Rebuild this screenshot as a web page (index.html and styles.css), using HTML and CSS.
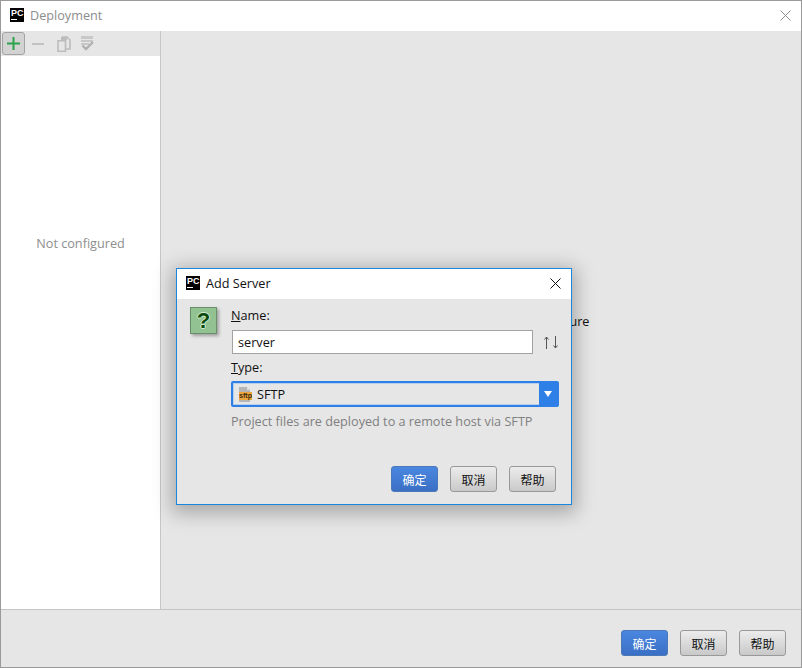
FILE: index.html
```html
<!DOCTYPE html>
<html lang="en">
<head>
<meta charset="utf-8">
<title>Deployment</title>
<link rel="stylesheet" href="styles.css">
</head>
<body>
<div class="window">
  <header class="titlebar">
    <span class="pc-logo"><span class="pc-text">PC</span><span class="pc-bar"></span></span>
    <span class="window-title">Deployment</span>
    <svg class="win-close" width="11" height="11" viewBox="0 0 11 11"><path d="M.5.500l10 10M10.500.500l-10 10" stroke="#8f8f8f" fill="none"/></svg>
  </header>
  <div class="middle">
    <aside class="sidebar">
      <div class="toolbar">
        <span class="tool tool-active">
          <svg width="13" height="13" viewBox="0 0 13 13"><path d="M6.500 0v13M0 6.500h13" stroke="#2ba24c" stroke-width="2" fill="none"/></svg>
        </span>
        <span class="tool tool-minus">
          <svg width="14" height="14" viewBox="0 0 14 14"><path d="M1 7h12" stroke="#c2c2c2" stroke-width="2" fill="none"/></svg>
        </span>
        <span class="tool tool-copy">
          <svg width="14" height="16" viewBox="0 0 14 16"><path d="M1 4.800h7.500v10.400H1zM5 1h5l3 3v9h-4" stroke="#bcbcbc" stroke-width="1.600" fill="none"/><path d="M4 1h6v3H4z" fill="#bcbcbc"/></svg>
        </span>
        <span class="tool tool-check">
          <svg width="13" height="15" viewBox="0 0 13 15"><path d="M0 0h12v3H0zM0 4h12v2H0zM0 7h8v2H0z" fill="#c8c8c8"/><path d="M1.500 9.500l3.500 3.500 7-7" stroke="#b0b0b0" stroke-width="2.400" fill="none"/></svg>
        </span>
      </div>
      <div class="list-area"><span class="empty-text">Not configured</span></div>
    </aside>
    <main class="content"><p class="hint">Please add a web server to configure</p></main>
  </div>
  <footer class="footer">
    <button class="btn btn-primary">确定</button>
    <button class="btn">取消</button>
    <button class="btn">帮助</button>
  </footer>

  <section class="dialog">
    <header class="dialog-title">
      <span class="pc-logo"><span class="pc-text">PC</span><span class="pc-bar"></span></span>
      <span class="dialog-name">Add Server</span>
      <svg class="dialog-close" width="11" height="11" viewBox="0 0 11 11"><path d="M.5.500l10 10M10.500.500l-10 10" stroke="#111" fill="none"/></svg>
    </header>
    <div class="dialog-body">
      <div class="question">?</div>
      <div class="form">
        <label class="field-label"><u>N</u>ame:</label>
        <div class="name-row">
          <div class="text-input">server</div>
          <svg class="sort-icon" width="16" height="13" viewBox="0 0 16 13"><path d="M3.500 13V1M1.500 3.500l2-2.500 2 2.500M12.500 0v12M10.500 9.500l2 2.500 2-2.500" stroke="#555" fill="none"/></svg>
        </div>
        <label class="field-label type-label"><u>T</u>ype:</label>
        <div class="select">
          <span class="select-value">
            <svg class="sftp-icon" width="13" height="15" viewBox="0 0 13 15"><path d="M0 0h8l3 3v12H0z" fill="#b5b5b5"/><path d="M8 0v3h3" fill="#ddd"/><rect y="5" width="13" height="8" fill="#eda63c"/><text class="sftp-text" x="6.500" y="11">sftp</text></svg>
            SFTP
          </span>
          <span class="select-arrow"><span class="arrow-shape"></span></span>
        </div>
        <p class="description">Project files are deployed to a remote host via SFTP</p>
      </div>
    </div>
    <footer class="dialog-footer">
      <button class="btn btn-primary">确定</button>
      <button class="btn">取消</button>
      <button class="btn">帮助</button>
    </footer>
  </section>
</div>
</body>
</html>
```
FILE: styles.css
```css
* { box-sizing: border-box; }
html, body { margin: 0; padding: 0; }
body {
  width: 802px;
  height: 668px;
  overflow: hidden;
  font-family: "Open Sans", "Noto Sans CJK SC", sans-serif;
  font-size: 12.67px;
  color: #111;
}
.window {
  position: relative;
  width: 802px;
  height: 668px;
  display: flex;
  flex-direction: column;
  border: 1px solid #9a9a9a;
  background: #e6e6e6;
}
.titlebar {
  height: 30px;
  flex: none;
  display: flex;
  align-items: center;
  padding: 0 0 2px 9px;
  background: #fff;
}
.pc-logo {
  position: relative;
  display: block;
  flex: none;
  width: 14px;
  height: 14px;
  background: #000;
}
.pc-text {
  position: absolute;
  left: 1px;
  top: 1px;
  color: #fff;
  font-family: "Liberation Sans", sans-serif;
  font-size: 9px;
  line-height: 8px;
  font-weight: 700;
}
.pc-bar {
  position: absolute;
  left: 1px;
  bottom: 2px;
  width: 6px;
  height: 1px;
  background: #fff;
}
.window-title {
  margin-left: 6px;
  color: #8c8c8c;
  line-height: 28px;
}
.win-close { margin-left: auto; margin-right: 10px; }
.middle { flex: 1; display: flex; min-height: 0; }
.sidebar {
  width: 160px;
  flex: none;
  display: flex;
  flex-direction: column;
  border-right: 1px solid #c6c6c6;
}
.toolbar {
  height: 25px;
  flex: none;
  display: flex;
  align-items: center;
  padding-left: 1px;
  background: #e6e6e6;
}
.tool {
  display: flex;
  align-items: center;
  justify-content: center;
  width: 23px;
  height: 23px;
}
.tool-active {
  border: 1px solid #a3a3a3;
  border-radius: 3px;
  background: #d2d2d2;
}
.tool-minus { margin-left: 1px; }
.tool-copy { margin-left: 3px; }
.tool-check { margin-left: 1px; }
.list-area {
  flex: 1;
  display: flex;
  justify-content: center;
  padding-top: 178px;
  background: #fff;
}
.empty-text { color: #8e8e8e; line-height: 18px; height: 18px; }
.content {
  flex: 1;
  display: flex;
  justify-content: center;
  padding-top: 280px;
}
.hint { margin: 0; line-height: 20px; }
.footer {
  height: 58px;
  flex: none;
  display: flex;
  justify-content: flex-end;
  align-items: flex-start;
  gap: 12px;
  padding: 20px 15px 0 0;
  border-top: 1px solid #c4c4c4;
}
.btn {
  width: 47px;
  height: 26px;
  padding: 0;
  border: 1px solid #999;
  border-radius: 3px;
  background: linear-gradient(#ececec, #c9c9c9);
  color: #111;
  font: 12px "Noto Sans CJK SC", sans-serif;
}
.btn-primary {
  border-color: #4a78b8;
  background: linear-gradient(#4a86e0, #3a70c4);
  color: #fff;
}
.dialog {
  position: absolute;
  left: 175px;
  top: 267px;
  width: 396px;
  height: 237px;
  display: flex;
  flex-direction: column;
  border: 1px solid #1c86dc;
  background: #e6e6e6;
  box-shadow: 0 4px 18px 4px rgba(0, 0, 0, .28);
}
.dialog-title {
  height: 30px;
  flex: none;
  display: flex;
  align-items: center;
  padding: 0 0 2px 9px;
  background: #fff;
}
.dialog-name { margin-left: 6px; }
.dialog-close { margin-left: auto; margin-right: 10px; }
.dialog-body { flex: 1; display: flex; padding: 7px 12px 0 13px; }
.question {
  width: 27px;
  height: 27px;
  flex: none;
  margin-top: 1px;
  border: 1px solid #6a8d6a;
  background: #92c292;
  box-shadow: 2px 2px 3px rgba(0, 0, 0, .3);
  color: #0c4a0c;
  font: 700 22px/25px "Liberation Sans", sans-serif;
  text-align: center;
  text-shadow: 1px 0 #cfeccf, -1px 0 #cfeccf, 0 1px #cfeccf, 0 -1px #cfeccf;
}
.form { margin-left: 14px; flex: 1; }
.field-label { display: block; line-height: 18px; }
.name-row {
  display: flex;
  align-items: center;
  margin: 6px 0 0 1px;
}
.text-input {
  width: 301px;
  height: 24px;
  border: 1px solid #a2a2a2;
  background: #fff;
  padding-left: 5px;
  line-height: 22px;
}
.sort-icon { margin-left: 10px; }
.type-label { margin-top: 4px; }
.select {
  display: flex;
  height: 26px;
  margin-top: 5px;
  border: 2px solid #2f80e6;
  border-radius: 2px;
  box-shadow: inset 0 0 0 1px #b9d0ec;
}
.select-value {
  flex: 1;
  display: flex;
  align-items: center;
  gap: 5px;
  padding-left: 6px;
  line-height: 22px;
}
.sftp-text {
  font-family: "Liberation Sans", sans-serif;
  font-size: 7px;
  font-weight: 700;
  fill: #3b2a10;
  text-anchor: middle;
}
.select-arrow {
  width: 18px;
  flex: none;
  display: flex;
  align-items: center;
  justify-content: center;
  background: #2f80e6;
}
.arrow-shape {
  width: 0;
  height: 0;
  border-left: 4px solid transparent;
  border-right: 4px solid transparent;
  border-top: 6px solid #fff;
}
.description { margin: 5px 0 0; color: #808080; line-height: 18px; }
.dialog-footer {
  flex: none;
  height: 38px;
  display: flex;
  justify-content: flex-end;
  gap: 12px;
  padding: 0 15px 0 0;
}
```
